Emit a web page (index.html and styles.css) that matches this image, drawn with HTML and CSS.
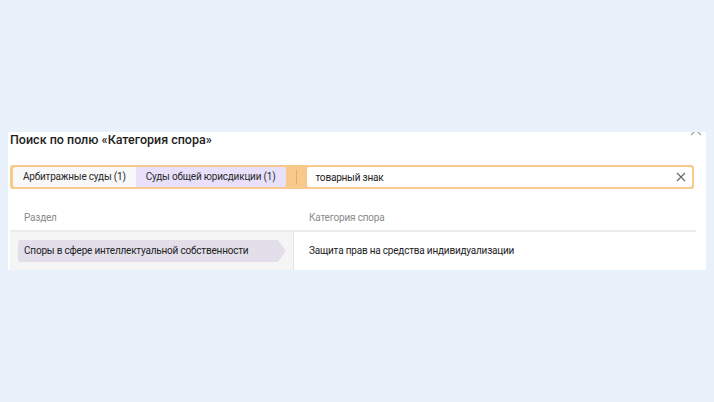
FILE: index.html
```html
<!DOCTYPE html>
<html lang="ru">
<head>
<meta charset="utf-8">
<link rel="stylesheet" href="styles.css">
</head>
<body>
<div class="panel">
  <svg class="close" width="14" height="14" viewBox="0 0 14 14"><path d="M2 2L12 12M12 2L2 12" stroke="#9a9a9a" stroke-width="1.1" fill="none"/></svg>
  <div class="title">Поиск по полю «Категория спора»</div>
  <div class="search">
    <div class="tab first">Арбитражные суды (1)</div>
    <div class="tab active">Суды общей юрисдикции (1)</div>
    <div class="sep"></div>
    <div class="input">
      <span class="value">товарный знак</span>
      <svg class="clear" width="10" height="10" viewBox="0 0 10 10"><path d="M1 1L9 9M9 1L1 9" stroke="#666" stroke-width="1.1" fill="none"/></svg>
    </div>
  </div>
  <div class="table">
    <div class="thead">
      <div class="th c1">Раздел</div>
      <div class="th c2">Категория спора</div>
    </div>
    <div class="row">
      <div class="cell c1"><div class="chip">Споры в сфере интеллектуальной собственности</div></div>
      <div class="cell c2">Защита прав на средства индивидуализации</div>
    </div>
  </div>
</div>
</body>
</html>
```
FILE: styles.css
```css
html, body { margin: 0; padding: 0; }
body {
  background: #e9f2fb;
  width: 714px;
  height: 402px;
  font-family: Roboto, "Noto Sans", sans-serif;
  color: #222;
}
.panel {
  position: relative;
  margin: 132px 0 0 8px;
  width: 698px;
  height: 138px;
  background: #fff;
  overflow: hidden;
  box-sizing: border-box;
  padding: 0 10px 0 2px;
}
.close {
  position: absolute;
  right: 3px;
  top: -9px;
}
.title {
  font-size: 12.5px;
  font-weight: 500;
  line-height: 16px;
  color: #1e1e1e;
}
.search {
  margin: 17px 2px 0 0;
  height: 24px;
  box-sizing: border-box;
  padding: 2px 2px 2px 3px;
  background: #f8c98c;
  border-radius: 3px;
  display: flex;
  align-items: stretch;
}
.tab, .input, .th, .chip, .cell.c2 {
  font-size: 10px;
  letter-spacing: -0.2px;
}
.tab {
  line-height: 20px;
  padding: 0 10px;
  background: #f8f8f8;
  color: #2a2a2a;
  white-space: nowrap;
}
.tab.first { border-radius: 2px 0 0 2px; }
.tab.active { background: #e9e1fb; border-radius: 0 2px 2px 0; padding: 0 11px 0 10px; }
.sep {
  width: 1px;
  margin: 3px 10px 3px 10px;
  background: #e6ad66;
}
.input {
  flex: 1;
  background: #fff;
  border-radius: 2px;
  display: flex;
  align-items: center;
  padding: 0 6px 0 8px;
  color: #222;
}
.value { flex: 1; }
.thead {
  display: flex;
  height: 41px;
  border-bottom: 2px solid #ececec;
}
.th {
  color: #8a8a8a;
  padding-top: 23px;
}
.c1 { width: 284px; box-sizing: border-box; }
.c2 { flex: 1; }
.th.c1 { padding-left: 14px; }
.th.c2 { padding-left: 15px; }
.row {
  display: flex;
  height: 39px;
}
.cell.c1 {
  background: #f5f5f5;
  border-right: 1px solid #e4e4e4;
  padding: 8px 0 0 8px;
}
.chip {
  height: 22px;
  width: 268px;
  box-sizing: border-box;
  background: #e3dfea;
  clip-path: polygon(0 0, calc(100% - 8px) 0, 100% 50%, calc(100% - 8px) 100%, 0 100%);
  border-radius: 3px 0 0 3px;
  line-height: 22px;
  padding-left: 6px;
  color: #222;
  white-space: nowrap;
}
.cell.c2 {
  padding-left: 15px;
  line-height: 38px;
  color: #222;
}
```
